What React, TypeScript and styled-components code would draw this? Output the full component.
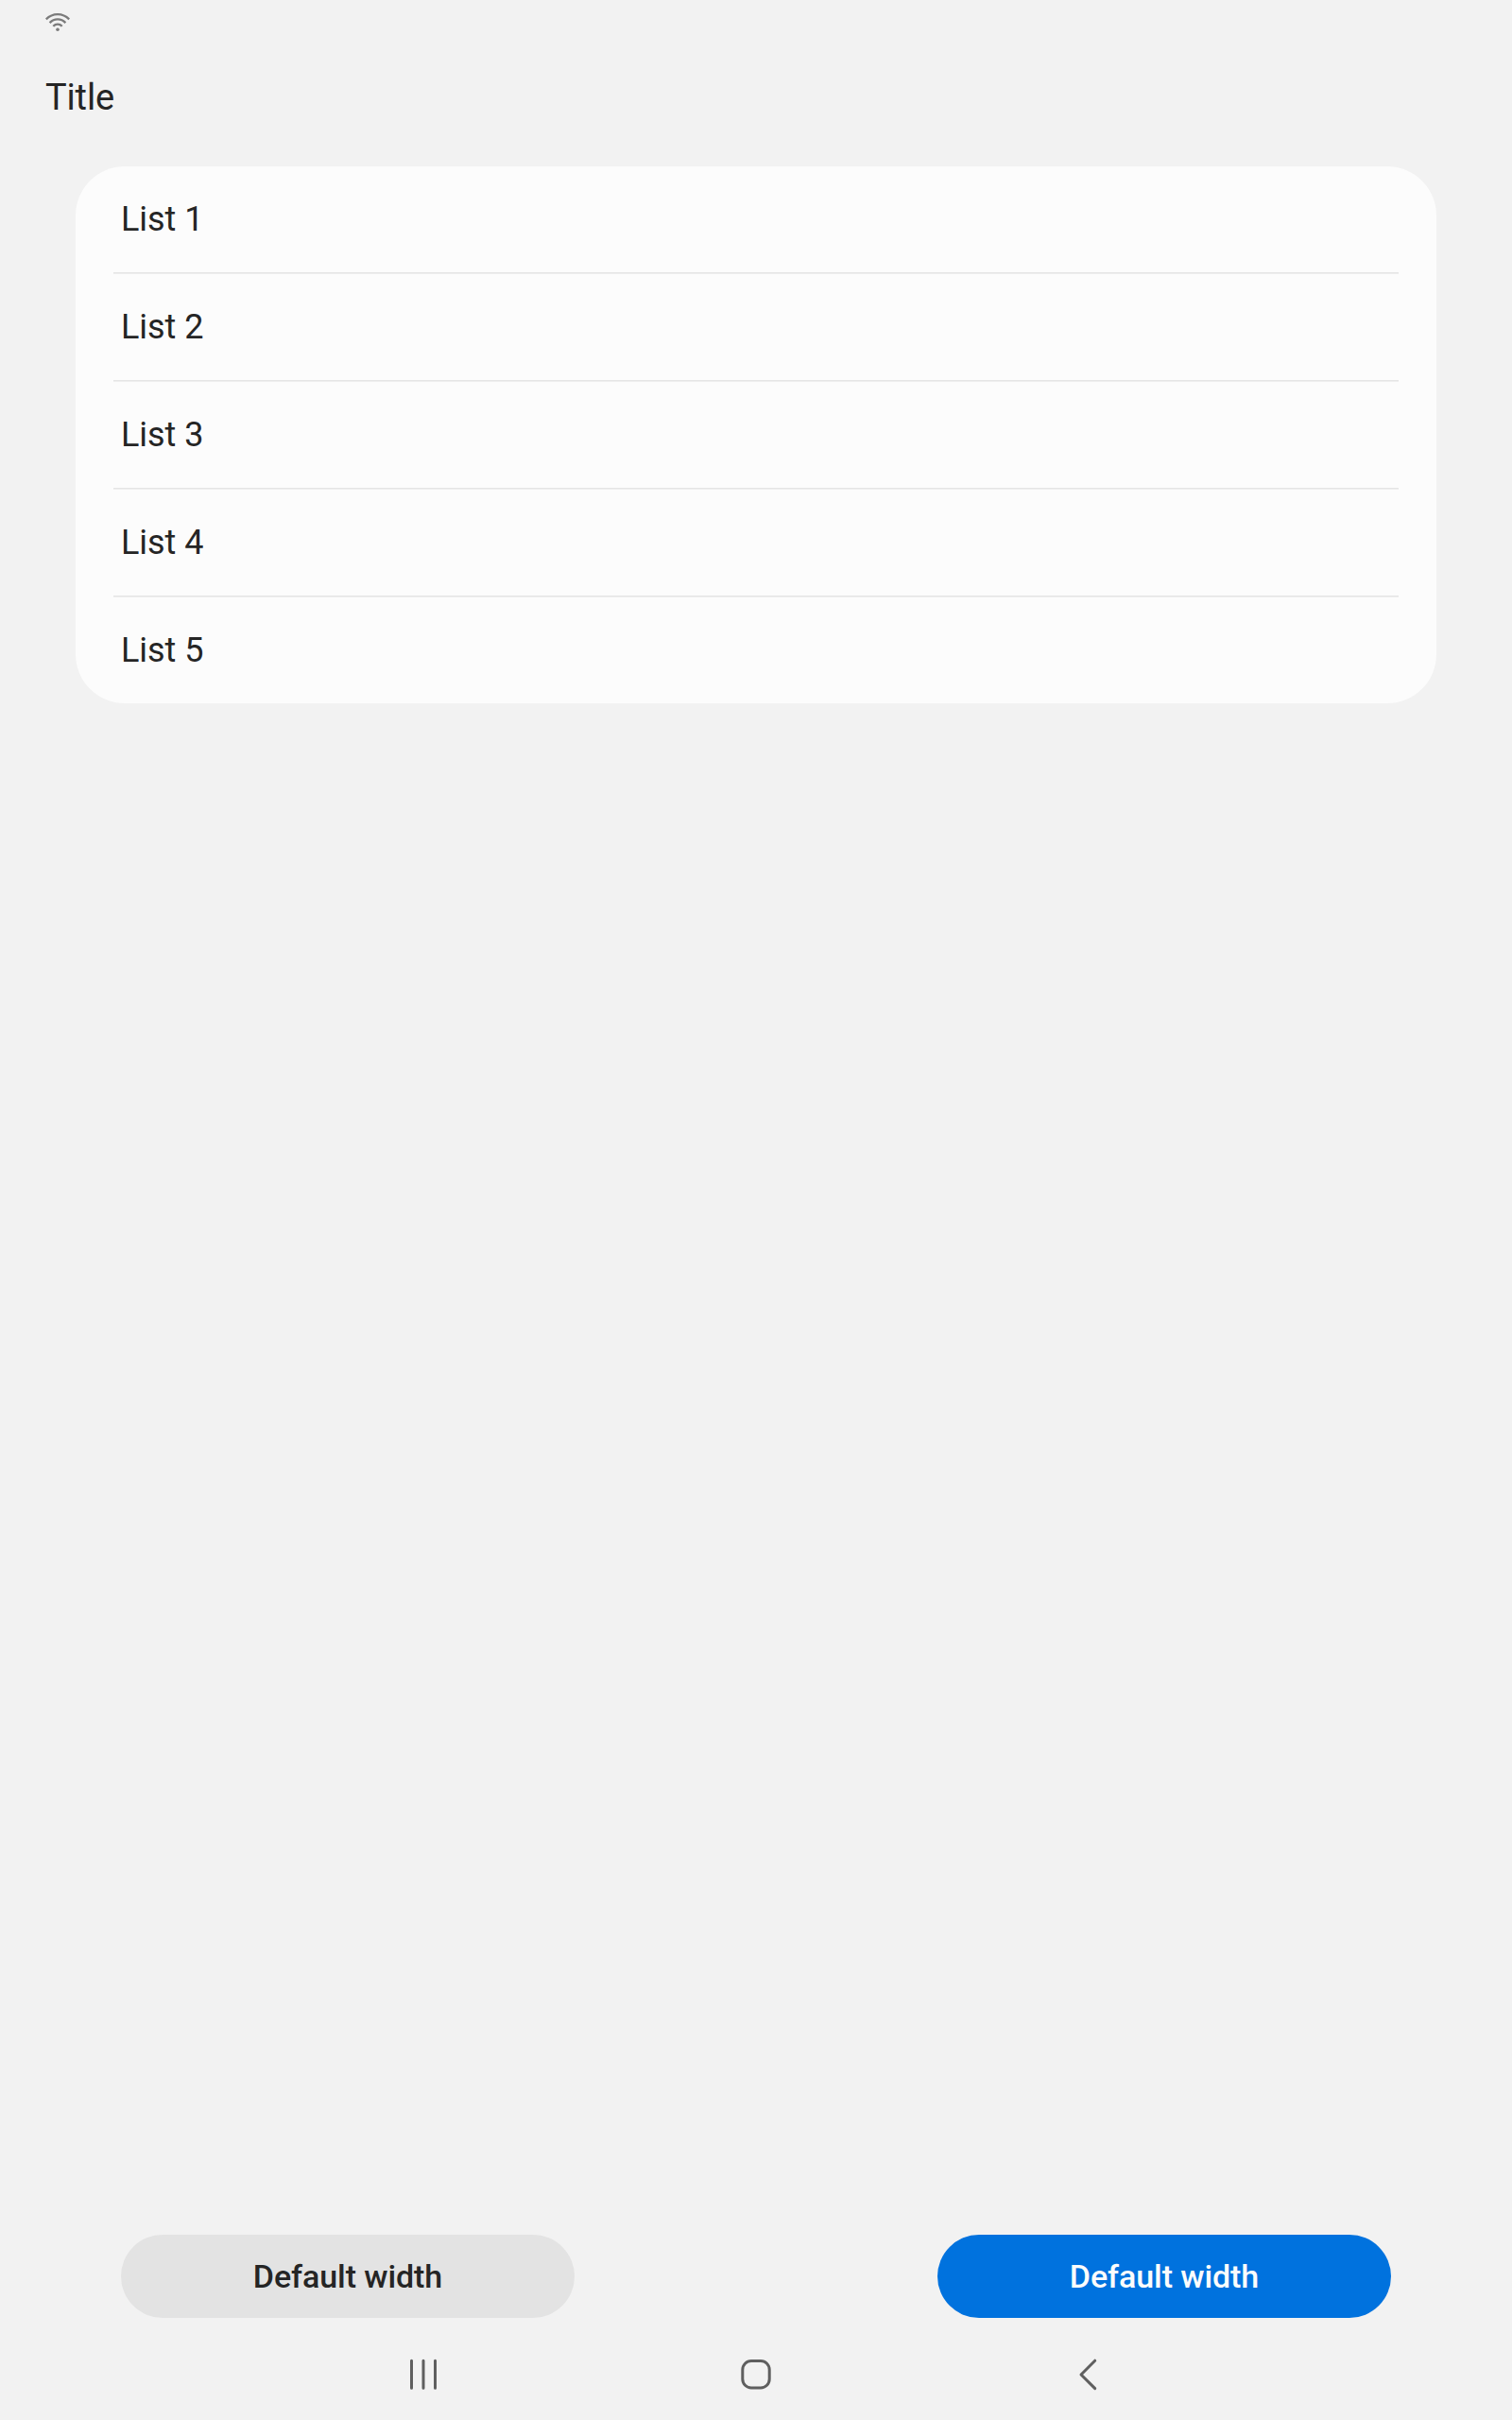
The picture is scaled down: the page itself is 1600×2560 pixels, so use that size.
import React from "react";
import styled, { createGlobalStyle } from "styled-components";

const GlobalStyle = createGlobalStyle`
  * { box-sizing: border-box; }
  body {
    margin: 0;
    background: #f2f2f2;
    color: #252525;
    font-family: Roboto, "Noto Sans", sans-serif;
  }
`;

const Screen = styled.div`
  display: flex;
  flex-direction: column;
  width: 1600px;
  height: 2560px;
  background: #f2f2f2;
`;

const StatusBar = styled.header`
  display: flex;
  align-items: center;
  height: 48px;
  padding: 0 48px;
  color: #7b7b7b;
`;

const AppBar = styled.div`
  display: flex;
  align-items: center;
  height: 110px;
  padding: 0 48px;
`;

const Title = styled.h1`
  margin: 0;
  font-size: 38px;
  line-height: 44px;
  font-weight: 400;
  letter-spacing: -0.15px;
`;

const Content = styled.main`
  flex: 1;
  padding: 18px 80px 0;
`;

const List = styled.ul`
  margin: 0;
  padding: 0 40px;
  list-style: none;
  border-radius: 52px;
  background: #fcfcfc;
`;

const ListItem = styled.li`
  display: flex;
  align-items: center;
  height: 112px;
  padding: 0 8px;
  font-size: 36px;
  line-height: 42px;
  letter-spacing: -0.05px;

  & + & {
    height: 114px;
    padding-top: 1px;
    border-top: 1px solid #e5e5e5;
    box-shadow: inset 0 1px #eeeeee;
  }
`;

const ButtonBar = styled.div`
  display: flex;
  justify-content: space-between;
  padding: 0 128px 12px;
`;

const Button = styled.button<{ $primary?: boolean }>`
  width: 480px;
  height: 88px;
  padding: 0;
  border: 0;
  border-radius: 44px;
  background: ${(p) => (p.$primary ? "#0072de" : "#e3e3e3")};
  color: ${(p) => (p.$primary ? "#fcfcfc" : "#252525")};
  font-family: inherit;
  font-size: 34px;
  line-height: 40px;
  font-weight: 500;
  letter-spacing: -0.08px;
`;

const NavBar = styled.nav`
  display: flex;
  justify-content: center;
  align-items: center;
  gap: 304px;
  height: 96px;
  color: #5f5f5f;
`;

const Icon = styled.svg`
  display: block;
  flex: none;
  fill: none;
  stroke: currentColor;
  stroke-linecap: round;
  stroke-linejoin: round;
`;

const WifiGlyph = styled(Icon)`
  stroke-linecap: butt;
`;

const WifiIcon = () => (
  <WifiGlyph width="26" height="24" viewBox="48 12 26 24" strokeWidth="2.3">
    <path d="M48.8 20.4 Q54 15.2 61 15.2 T73.2 20.4" />
    <path d="M52.6 24.1 Q56.2 20.4 61 20.4 T69.4 24.1" />
    <path d="M56.3 27.7 Q58.3 25.6 61 25.6 T65.7 27.7" />
    <circle cx="61" cy="31.3" r="1.8" fill="currentColor" stroke="none" />
  </WifiGlyph>
);

const RecentsIcon = () => (
  <Icon width="48" height="48" viewBox="0 0 48 48" strokeWidth="3">
    <path d="M11.5 9.2V38.2M24 9.2V38.2M36.5 9.2V38.2" />
  </Icon>
);

const HomeIcon = () => (
  <Icon width="48" height="48" viewBox="0 0 48 48" strokeWidth="3">
    <rect x="9.8" y="9.6" width="28.4" height="28.4" rx="9.2" />
  </Icon>
);

const BackIcon = () => (
  <Icon width="48" height="48" viewBox="0 0 48 48" strokeWidth="3">
    <path d="M30.7 9.2L16 24L30.7 38.6" />
  </Icon>
);

const items = ["List 1", "List 2", "List 3", "List 4", "List 5"];

export default function App() {
  return (
    <>
      <GlobalStyle />
      <Screen>
        <StatusBar>
          <WifiIcon />
        </StatusBar>
        <AppBar>
          <Title>Title</Title>
        </AppBar>
        <Content>
          <List>
            {items.map((item) => (
              <ListItem key={item}>{item}</ListItem>
            ))}
          </List>
        </Content>
        <ButtonBar>
          <Button>Default width</Button>
          <Button $primary>Default width</Button>
        </ButtonBar>
        <NavBar>
          <RecentsIcon />
          <HomeIcon />
          <BackIcon />
        </NavBar>
      </Screen>
    </>
  );
}
